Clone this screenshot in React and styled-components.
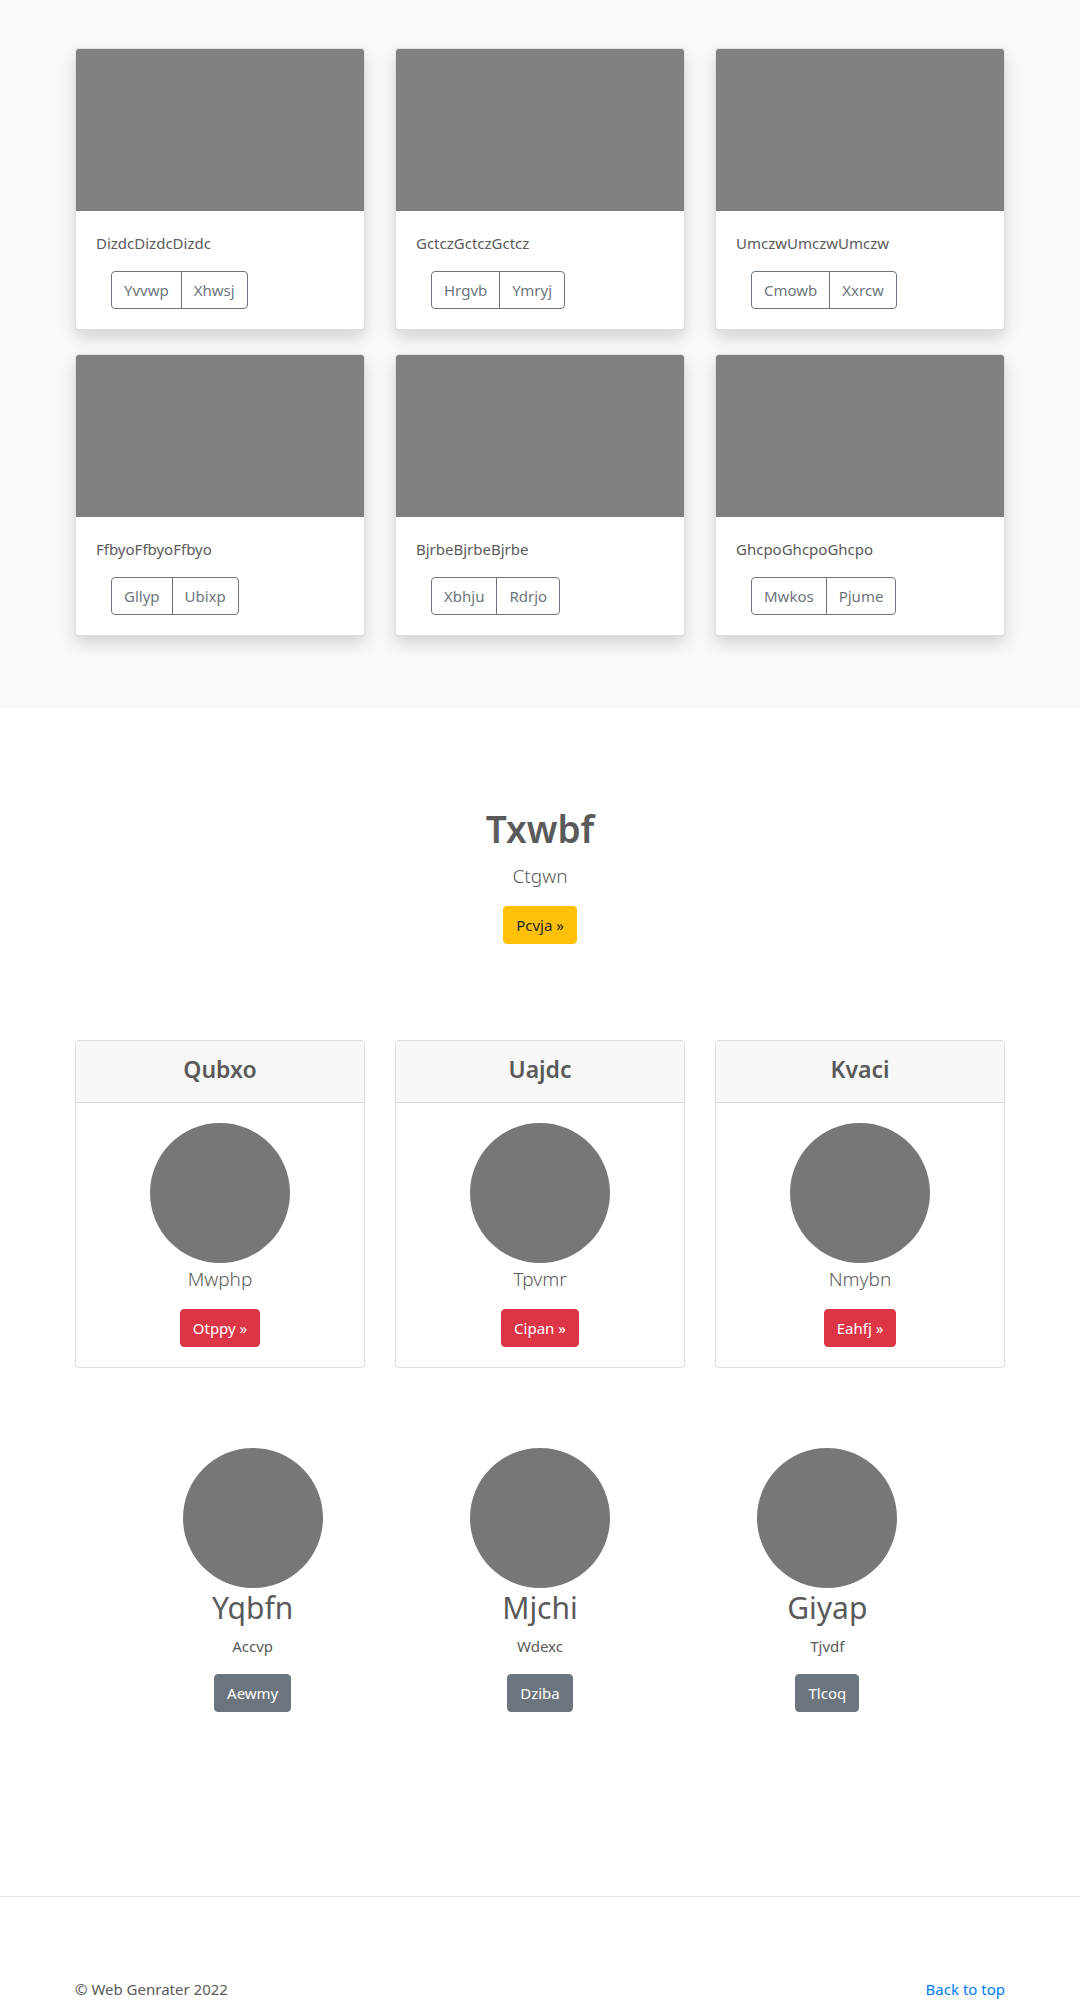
import React from "react";
import styled, { createGlobalStyle } from "styled-components";

const GlobalStyle = createGlobalStyle`
  *, *::before, *::after { box-sizing: border-box; }
  body {
    margin: 0;
    background: #fff;
    color: #5a5a5a;
    font-family: "Segoe UI", "Noto Sans", "Open Sans", sans-serif;
    font-size: 15px;
    line-height: 24px;
  }
  h1, h2, h3, p { margin: 0; }
`;

const Container = styled.div`
  max-width: 960px;
  margin: 0 auto;
  padding: 0 15px;
`;

const Album = styled.section`
  background: #f8f9fa;
  padding: 48px 0 72px;
`;

const CardGrid = styled.div`
  display: grid;
  grid-template-columns: repeat(3, 1fr);
  gap: 24px 30px;
`;

const Card = styled.article`
  background: #fff;
  border: 1px solid rgba(0, 0, 0, 0.125);
  border-radius: 4px;
  overflow: hidden;
  box-shadow: ${(p) => (p.$raised ? "0 8px 16px rgba(0, 0, 0, 0.15)" : "none")};
`;

const Thumbnail = styled.div`
  height: 162px;
  background: #808080;
`;

const CardBody = styled.div`
  padding: 20px;
`;

const ButtonGroup = styled.div`
  display: flex;
  margin: 16px 15px 0;
`;

const Button = styled.button`
  height: 38px;
  padding: 0 12px;
  border: 1px solid ${(p) => p.$color};
  border-radius: 4px;
  background: ${(p) => p.$color};
  color: ${(p) => p.$text || "#fff"};
  font: inherit;
  cursor: pointer;
`;

const OutlineButton = styled(Button)`
  background: transparent;
  color: #6c757d;
  &:first-child { border-radius: 4px 0 0 4px; }
  &:last-child { border-radius: 0 4px 4px 0; margin-left: -1px; }
`;

const Centered = styled.div`
  display: flex;
  flex-direction: column;
  align-items: center;
  text-align: center;
`;

const Hero = styled(Centered)`
  padding: 96px 15px;
`;

const HeroTitle = styled.h1`
  padding-top: 2px;
  margin-bottom: 8px;
  font-size: 37px;
  line-height: 46px;
  font-weight: 600;
`;

const Lead = styled.p`
  padding-top: 2px;
  margin-bottom: 16px;
  font-size: 19px;
  line-height: 28px;
  font-weight: 300;
`;

const CardHeader = styled.div`
  padding: 14px 20px 18px;
  background: #f7f7f7;
  border-bottom: 1px solid rgba(0, 0, 0, 0.125);
  text-align: center;
`;

const CardTitle = styled.h2`
  font-size: 23px;
  line-height: 29px;
  font-weight: 600;
`;

const CardContent = styled(Centered)`
  padding: 20px;
`;

const Circle = styled.div`
  width: 140px;
  height: 140px;
  border-radius: 50%;
  background: #777;
`;

const Team = styled.div`
  display: grid;
  grid-template-columns: repeat(3, 1fr);
  padding: 80px 34px 184px;
`;

const TeamName = styled.h3`
  padding-top: 2px;
  margin-bottom: 8px;
  font-size: 30px;
  line-height: 36px;
  font-weight: 400;
`;

const TeamText = styled.p`
  margin-bottom: 16px;
`;

const Footer = styled.footer`
  border-top: 1px solid rgba(0, 0, 0, 0.1);
  padding-top: 80px;
`;

const FooterRow = styled(Container)`
  display: flex;
  justify-content: space-between;
`;

const TopLink = styled.a`
  color: #007bff;
  text-decoration: none;
`;

const albums = [
  ["DizdcDizdcDizdc", "Yvvwp", "Xhwsj"],
  ["GctczGctczGctcz", "Hrgvb", "Ymryj"],
  ["UmczwUmczwUmczw", "Cmowb", "Xxrcw"],
  ["FfbyoFfbyoFfbyo", "Gllyp", "Ubixp"],
  ["BjrbeBjrbeBjrbe", "Xbhju", "Rdrjo"],
  ["GhcpoGhcpoGhcpo", "Mwkos", "Pjume"],
];

const features = [
  ["Qubxo", "Mwphp", "Otppy »"],
  ["Uajdc", "Tpvmr", "Cipan »"],
  ["Kvaci", "Nmybn", "Eahfj »"],
];

const team = [
  ["Yqbfn", "Accvp", "Aewmy"],
  ["Mjchi", "Wdexc", "Dziba"],
  ["Giyap", "Tjvdf", "Tlcoq"],
];

export default function App() {
  return (
    <>
      <GlobalStyle />
      <main>
        <Album>
          <Container>
            <CardGrid>
              {albums.map(([text, first, second]) => (
                <Card key={text} $raised>
                  <Thumbnail />
                  <CardBody>
                    <p>{text}</p>
                    <ButtonGroup role="group">
                      <OutlineButton type="button" $color="#6c757d">{first}</OutlineButton>
                      <OutlineButton type="button" $color="#6c757d">{second}</OutlineButton>
                    </ButtonGroup>
                  </CardBody>
                </Card>
              ))}
            </CardGrid>
          </Container>
        </Album>
        <Hero as="section">
          <HeroTitle>Txwbf</HeroTitle>
          <Lead>Ctgwn</Lead>
          <Button type="button" $color="#ffc107" $text="#212529">Pcvja »</Button>
        </Hero>
        <Container>
          <CardGrid>
            {features.map(([title, text, action]) => (
              <Card key={title}>
                <CardHeader>
                  <CardTitle>{title}</CardTitle>
                </CardHeader>
                <CardContent>
                  <Circle />
                  <Lead>{text}</Lead>
                  <Button type="button" $color="#dc3545">{action}</Button>
                </CardContent>
              </Card>
            ))}
          </CardGrid>
          <Team>
            {team.map(([name, text, action]) => (
              <Centered key={name}>
                <Circle />
                <TeamName>{name}</TeamName>
                <TeamText>{text}</TeamText>
                <Button type="button" $color="#6c757d">{action}</Button>
              </Centered>
            ))}
          </Team>
        </Container>
      </main>
      <Footer>
        <FooterRow>
          <p>© Web Genrater 2022</p>
          <TopLink href="#root">Back to top</TopLink>
        </FooterRow>
      </Footer>
    </>
  );
}
